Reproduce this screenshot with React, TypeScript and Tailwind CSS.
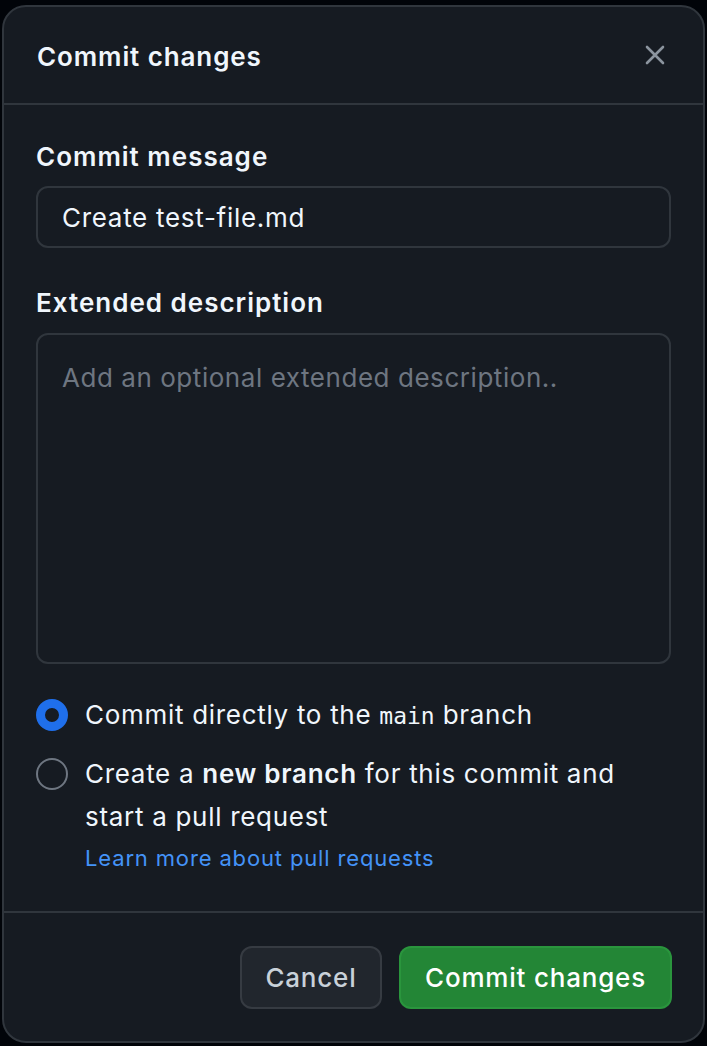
import { useState } from "react";

export default function App() {
  const [mode, setMode] = useState<"direct" | "branch">("direct");

  return (
    <div
      className="min-h-[1046px] w-full bg-[#010409] pt-[5px] px-[2px] pb-[3px]"
      style={{ fontFamily: "Inter, 'Noto Sans', sans-serif" }}
    >
      <div className="flex flex-col h-[1038px] w-full rounded-[24px] border-2 border-[#30363d] bg-[#161b22] overflow-hidden">
        {/* Header */}
        <div className="flex items-center justify-between h-[98px] shrink-0 pl-[33px] pr-[38px] border-b-2 border-[#30363d]">
          <h1 className="text-[26px] font-semibold text-[#f0f6fc] tracking-[0.9px] pt-[2px]">Commit changes</h1>
          <button className="text-[#8b949e]" aria-label="Close">
            <svg width="20" height="20" viewBox="0 0 20 20" fill="none">
              <path d="M2 2l16 16M18 2L2 18" stroke="currentColor" strokeWidth="2.6" strokeLinecap="round" />
            </svg>
          </button>
        </div>

        {/* Body */}
        <div className="flex flex-col flex-1 px-[32px] pt-[33px]">
          <label className="h-[36px] flex items-center text-[26px] font-semibold tracking-[1px] text-[#f0f6fc]">
            Commit message
          </label>
          <div className="mt-[12px] h-[62px] flex items-center rounded-[12px] border-2 border-[#30363d] px-[24px] text-[26px] tracking-[0.7px] text-[#f0f6fc]">
            Create test-file.md
          </div>

          <label className="mt-[36px] h-[36px] flex items-center text-[26px] font-semibold tracking-[1px] text-[#f0f6fc]">
            Extended description
          </label>
          <div className="mt-[13px] h-[331px] rounded-[12px] border-2 border-[#30363d] px-[24px] pt-[25px]">
            <span className="text-[26px] leading-[36px] tracking-[0.55px] text-[#6e7681]">
              Add an optional extended description..
            </span>
          </div>

          <div className="mt-[29px] flex flex-col gap-[14px]">
            <div className="flex items-start gap-[17px] cursor-pointer" onClick={() => setMode("direct")}>
              <span className="mt-[5.5px] w-[32px] h-[32px] shrink-0 rounded-full flex items-center justify-center">
                {mode === "direct" ? (
                  <span className="w-[32px] h-[32px] rounded-full border-[9px] border-[#1f6feb] bg-[#161b22]" />
                ) : (
                  <span className="w-[32px] h-[32px] rounded-full border-2 border-[#6e7681]" />
                )}
              </span>
              <span className="text-[26px] leading-[43px] tracking-[0.7px] text-[#f0f6fc]">
                Commit directly to the{" "}
                <code className="text-[23px] tracking-normal" style={{ fontFamily: "'DejaVu Sans Mono', monospace" }}>
                  main
                </code>{" "}
                branch
              </span>
            </div>

            <div className="flex items-start gap-[17px] cursor-pointer" onClick={() => setMode("branch")}>
              <span className="mt-[5.5px] w-[32px] h-[32px] shrink-0 rounded-full flex items-center justify-center">
                {mode === "branch" ? (
                  <span className="w-[32px] h-[32px] rounded-full border-[9px] border-[#1f6feb] bg-[#161b22]" />
                ) : (
                  <span className="w-[32px] h-[32px] rounded-full border-2 border-[#6e7681]" />
                )}
              </span>
              <div className="flex flex-col">
                <span className="text-[26px] leading-[43px] tracking-[0.7px] text-[#f0f6fc]">
                  Create a <b className="font-semibold">new branch</b> for this commit and
                  <br />
                  start a pull request
                </span>
                <a href="#" className="text-[22px] leading-[40px] tracking-[0.85px] text-[#4493f8]">
                  Learn more about pull requests
                </a>
              </div>
            </div>
          </div>
        </div>

        {/* Footer */}
        <div className="flex items-center justify-end gap-[17px] h-[130px] shrink-0 px-[31px] border-t-2 border-[#30363d]">
          <button className="h-[63px] w-[142px] rounded-[12px] border-2 border-[#363b42] bg-[#21262d] text-[26px] font-medium tracking-[0.8px] text-[#c9d1d9]">
            Cancel
          </button>
          <button className="h-[63px] w-[273px] rounded-[12px] border-2 border-[#2ea043]/60 bg-[#238636] text-[26px] font-medium tracking-[0.8px] text-white">
            Commit changes
          </button>
        </div>
      </div>
    </div>
  );
}
